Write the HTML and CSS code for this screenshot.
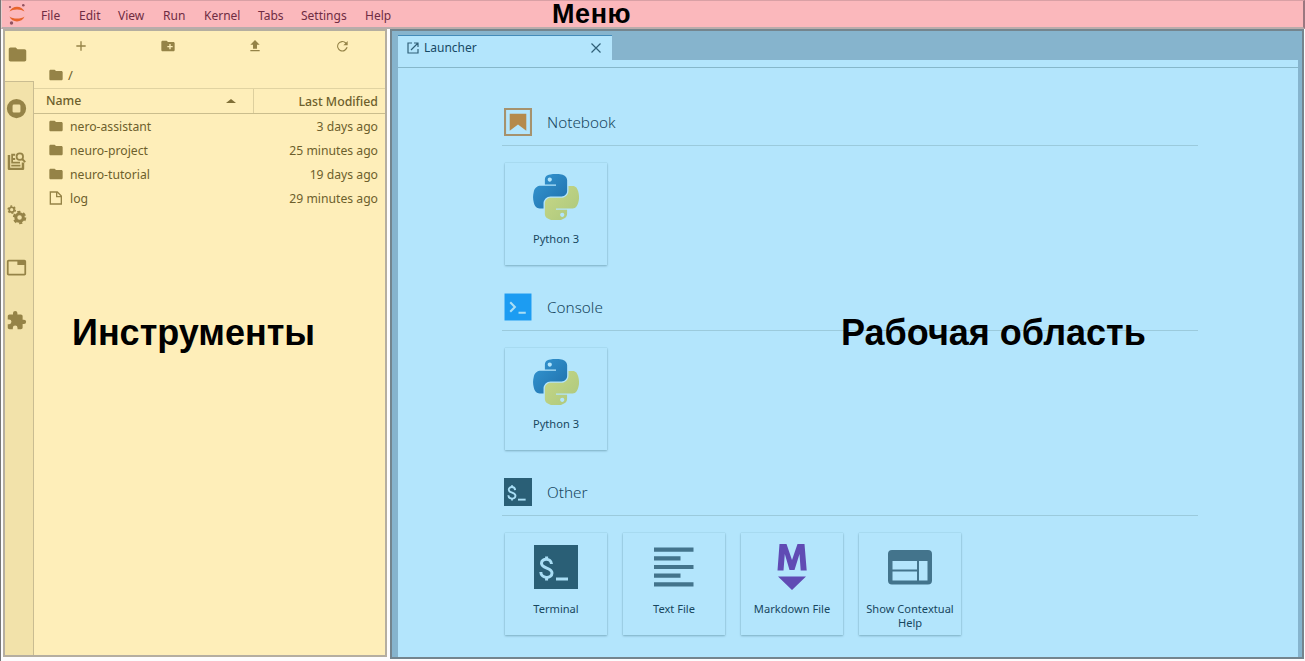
FILE: index.html
```html
<!DOCTYPE html>
<html lang="ru">
<head>
<meta charset="utf-8">
<title>JupyterLab</title>
<link rel="stylesheet" href="styles.css">
</head>
<body>
<svg class="defs" width="0" height="0">
  <defs>
    <linearGradient id="pyBlue" x1="0" y1="0" x2="1" y2="1"><stop offset="0" stop-color="#3598d3"/><stop offset="1" stop-color="#1e6eaa"/></linearGradient>
    <linearGradient id="pyGreen" x1="0" y1="0" x2="1" y2="1"><stop offset="0" stop-color="#c8d886"/><stop offset="1" stop-color="#abc77d"/></linearGradient>
    <symbol id="folder" viewBox="0 0 24 24"><path d="M10 4H4c-1.100 0-2 .9-2 2v12c0 1.100.9 2 2 2h16c1.100 0 2-.9 2-2V8c0-1.100-.9-2-2-2h-8z"/></symbol>
    <symbol id="python" viewBox="0 0 111 111">
      <path fill="url(#pyBlue)" d="M54.9 0c-4.6 0-9 .4-12.800 1.100C30.800 3.100 28.700 7.300 28.700 15v10.200h26.800v3.400H18.700c-7.800 0-14.600 4.700-16.700 13.600-2.500 10.200-2.600 16.600 0 27.200 1.900 7.900 6.400 13.600 14.200 13.600h9.200V70.800c0-8.800 7.700-16.700 16.800-16.700h26.800c7.400 0 13.400-6.100 13.400-13.600V15c0-7.300-6.100-12.700-13.400-13.900C64.300.3 59.500 0 54.900 0zM40.400 8.200c2.800 0 5.100 2.300 5.100 5.100s-2.300 5.100-5.100 5.100-5-2.300-5-5.100 2.200-5.100 5-5.100z"/>
      <path fill="url(#pyGreen)" d="M85.600 28.700v11.900c0 9.200-7.800 17-16.800 17H42c-7.300 0-13.400 6.300-13.400 13.600v25.500c0 7.300 6.300 11.500 13.400 13.600 8.500 2.500 16.600 3 26.800 0 6.700-2 13.400-5.900 13.400-13.600V86.500H55.500v-3.400h40.200c7.800 0 10.700-5.400 13.400-13.600 2.800-8.400 2.700-16.500 0-27.200-1.900-7.800-5.600-13.600-13.400-13.600zM70.600 93.300c2.800 0 5 2.300 5 5.100s-2.200 5.100-5 5.100-5.100-2.300-5.100-5.100 2.300-5.100 5.100-5.100z"/>
    </symbol>
    <symbol id="terminal" viewBox="0 0 44 44">
      <rect width="44" height="44" fill="#2a5f76"/>
      <path fill="none" stroke="#a9def5" stroke-width="3" d="M17.500 19C17 12.500 7.500 13 7.500 18.300c0 5.700 10.500 4 10.500 9.700 0 6-11 6-11.200-1M12.600 11.500v4M12.600 31v4.500"/>
      <path fill="#a9def5" d="M22 32.500h12v3H22z"/>
    </symbol>
  </defs>
</svg>
<div class="app">
  <header class="menubar">
    <svg class="logo" viewBox="0 0 18 22"><path fill="#e8642c" d="M1.500 8.500C4 2 14 2 16.500 8.500 13 5.800 5 5.800 1.500 8.500zM1.500 13.500c2.500 6.500 12.500 6.500 15 0-3.500 2.700-11.500 2.700-15 0z"/><g fill="#925360"><circle cx="2" cy="4" r="1.100"/><circle cx="15.300" cy="2.300" r="1.300"/><circle cx="3.500" cy="20" r="1.700"/></g></svg>
    <nav class="menus"><span class="m-file">File</span><span class="m-edit">Edit</span><span class="m-view">View</span><span class="m-run">Run</span><span class="m-kernel">Kernel</span><span class="m-tabs">Tabs</span><span class="m-settings">Settings</span><span>Help</span></nav>
    <div class="note note-menu">Меню</div>
  </header>
  <div class="body">
    <aside class="sidebar">
      <nav class="activity">
        <div class="act current"><svg viewBox="0 0 24 24"><use href="#folder"/></svg></div>
        <div class="rest">
          <div class="act"><svg viewBox="0 0 24 24"><path fill-rule="evenodd" d="M12 1a11 11 0 1 0 0 22 11 11 0 0 0 0-22zM9 7.500h6A1.500 1.500 0 0 1 16.500 9v6a1.500 1.500 0 0 1-1.500 1.500H9A1.500 1.500 0 0 1 7.500 15V9A1.500 1.500 0 0 1 9 7.500z"/></svg></div>
          <div class="act"><svg viewBox="0 0 24 24"><path d="M2 4.500h2.800V19H18v-6h2.800v7.300c0 .8-.6 1.400-1.400 1.400H3.400c-.8 0-1.400-.6-1.400-1.400z"/><path d="M6 3h4.500v2.500H8V8h2.500v2.200H8v2h8v2.200H6zM6 15.800h10.500v1.800H6z"/><circle cx="15.800" cy="6.500" r="3.700" fill="none" stroke="#958347" stroke-width="2"/><path fill="none" stroke="#958347" stroke-width="2.200" d="M18.500 9.200l3.500 3.500"/></svg></div>
          <div class="act"><svg viewBox="0 0 24 24"><g fill="none" stroke="#958347"><circle cx="15.500" cy="15.500" r="4.300" stroke-width="3.400"/><circle cx="15.500" cy="15.500" r="6.500" stroke-width="2.400" stroke-dasharray="3.600 3.207"/><circle cx="6.500" cy="6.500" r="2.800" stroke-width="1.900"/><circle cx="6.500" cy="6.500" r="4.100" stroke-width="1.700" stroke-dasharray="2.200 2.094"/></g></svg></div>
          <div class="act"><svg viewBox="0 0 24 24"><path fill-rule="evenodd" d="M3 3h18c1.100 0 2 .9 2 2v14c0 1.100-.9 2-2 2H3c-1.100 0-2-.9-2-2V5c0-1.100.9-2 2-2zm0 2v14h18V9h-8V5z"/></svg></div>
          <div class="act"><svg viewBox="0 0 24 24"><path d="M20.500 11H19V7c0-1.100-.9-2-2-2h-4V3.500a2.500 2.500 0 0 0-5 0V5H4c-1.100 0-2 .9-2 2v3.800h1.500a2.700 2.700 0 0 1 0 5.400H2V20c0 1.100.9 2 2 2h3.800v-1.500a2.700 2.700 0 0 1 5.400 0V22H17c1.100 0 2-.9 2-2v-4h1.500a2.500 2.500 0 0 0 0-5z"/></svg></div>
        </div>
      </nav>
      <section class="files">
        <div class="tools">
          <span><svg viewBox="0 0 24 24"><path d="M19 13h-6v6h-2v-6H5v-2h6V5h2v6h6z"/></svg></span>
          <span><svg viewBox="0 0 24 24"><path d="M20 6h-8l-2-2H4C2.900 4 2 4.900 2 6v12c0 1.100.9 2 2 2h16c1.100 0 2-.9 2-2V8c0-1.100-.9-2-2-2zm-1 8h-3v3h-2v-3h-3v-2h3V9h2v3h3z"/></svg></span>
          <span><svg viewBox="0 0 24 24"><path d="M9 16h6v-6h4l-7-7-7 7h4zm-4 2h14v2H5z"/></svg></span>
          <span><svg viewBox="0 0 24 24"><path d="M18.300 6.700A8 8 0 1 0 20.500 14h-2.100a6.200 6.200 0 1 1-1.500-5.900L14 11h6.500V4.500z"/></svg></span>
        </div>
        <div class="crumb"><svg viewBox="0 0 24 24"><use href="#folder"/></svg><span>/</span></div>
        <div class="head"><div class="h-name">Name<i class="sort"></i></div><div class="h-mod">Last Modified</div></div>
        <div class="list">
          <div class="row"><svg viewBox="0 0 24 24"><use href="#folder"/></svg><span>nero-assistant</span><time>3 days ago</time></div>
          <div class="row"><svg viewBox="0 0 24 24"><use href="#folder"/></svg><span>neuro-project</span><time>25 minutes ago</time></div>
          <div class="row"><svg viewBox="0 0 24 24"><use href="#folder"/></svg><span>neuro-tutorial</span><time>19 days ago</time></div>
          <div class="row"><svg viewBox="0 0 24 24"><path fill="none" stroke="#958347" stroke-width="2" d="M3.500 3h10.500l6 6v12H3.500zM13 3v7h7"/></svg><span>log</span><time>29 minutes ago</time></div>
        </div>
      </section>
      <div class="note note-tools">Инструменты</div>
    </aside>
    <main class="dock">
      <div class="tabbar"><div class="tab"><svg class="launch" viewBox="0 0 12 12"><path d="M5 1H1v10h10V7M7 1h4v4M11 1L4 8"/></svg><span>Launcher</span><svg class="close" viewBox="0 0 12 12"><path d="M1.500 1.500l9 9M10.500 1.500l-9 9"/></svg></div></div>
      <div class="strip"></div>
      <div class="launcher">
        <section class="group">
          <h2><svg viewBox="0 0 27 27"><path fill="none" stroke="#a6926d" stroke-width="2" d="M1 1h25v25H1z"/><path fill="#b58a4b" d="M5.500 5.500h16V22l-8-6-8 6z"/></svg>Notebook</h2>
          <div class="cards"><div class="card"><svg viewBox="0 0 46 46"><use href="#python"/></svg><p>Python 3</p></div></div>
        </section>
        <section class="group">
          <h2><svg viewBox="0 0 27 27"><path fill="#1c9cf2" d="M.5.500h26v26H.5z"/><path fill="none" stroke="#a9def5" stroke-width="2" d="M6 9l4.500 4.500L6 18M14 19h7"/></svg>Console</h2>
          <div class="cards"><div class="card"><svg viewBox="0 0 46 46"><use href="#python"/></svg><p>Python 3</p></div></div>
        </section>
        <section class="group">
          <h2><svg viewBox="0 0 27 27"><use href="#terminal"/></svg>Other</h2>
          <div class="cards">
            <div class="card"><svg viewBox="0 0 46 46"><use href="#terminal" x="1" y="1" width="44" height="44"/></svg><p>Terminal</p></div>
            <div class="card"><svg viewBox="0 0 46 46"><path fill="#43748c" d="M3 3.500h39.500v4.200H3zM3 12.200h26.500v4.200H3zM3 20.900h39.500v4.200H3zM3 29.600h26.500v4.200H3zM3 38.300h39.500v4.200H3z"/></svg><p>Text File</p></div>
            <div class="card"><svg viewBox="0 0 46 46"><path fill="#604bb4" d="M8.500 26.500L10.500 0h7L23 16 28.500 0h7l2.200 26.500h-6L30.500 10 25.500 26h-5L15.800 10l-1.300 16.500zM9 32.500h28L23 46z"/></svg><p>Markdown File</p></div>
            <div class="card"><svg viewBox="0 0 46 46"><path fill="#43748c" fill-rule="evenodd" d="M5 6h36a4 4 0 0 1 4 4v26.500a4 4 0 0 1-4 4H5a4 4 0 0 1-4-4V10a4 4 0 0 1 4-4zM5.500 17v8.500H30V17zm0 10.500v9H30v-9zM32 17v19.500h8.500V17z"/></svg><p>Show Contextual<br>Help</p></div>
          </div>
        </section>
      </div>
      <div class="note note-work">Рабочая область</div>
    </main>
  </div>
</div>
</body>
</html>
```
FILE: styles.css
```css
* { box-sizing: border-box; }
body { margin: 0; font-family: "Noto Sans", "Open Sans", sans-serif; font-size: 12px; background: #fdfcfd; }
.defs { position: absolute; }
.app { width: 1305px; height: 661px; display: flex; flex-direction: column; overflow: hidden; border-left: 1px solid #777; }
.menubar { position: relative; height: 29px; flex: none; display: flex; padding-left: 6px; background: #fbb8bc; border-top: 1px solid #d9a0a5; border-bottom: 2px solid #b9acab; border-right: 2px solid #9b7780; border-left: 1px solid #e8d0d0; }
.logo { width: 18px; height: 22px; margin-top: 2px; flex: none; }
.menus { display: flex; padding-left: 15px; line-height: 30px; color: #6f2c43; white-space: nowrap; }
.menus span { width: 54px; }
.menus .m-file { width: 38px; }
.menus .m-edit { width: 39px; }
.menus .m-view { width: 45px; }
.menus .m-run { width: 41px; }
.menus .m-tabs { width: 43px; }
.menus .m-settings { width: 64px; }
.note { position: absolute; font-family: "Liberation Sans", Arial, sans-serif; font-weight: bold; color: #000; white-space: nowrap; line-height: 1; }
.note-menu { left: 550px; top: 0; font-size: 27px; letter-spacing: 0.6px; }
.body { flex: 1; display: flex; gap: 3px; padding-left: 2px; min-height: 0; }
.sidebar { position: relative; width: 384px; height: 628px; display: flex; background: #feeeb9; border: 2px solid #b5aea0; }
.activity { width: 29px; flex: none; display: flex; flex-direction: column; fill: #958347; }
.act { height: 53px; display: flex; align-items: center; justify-content: center; margin-left: -5px; }
.act svg { width: 21px; height: 21px; }
.act.current { height: 50px; padding-bottom: 3px; }
.rest { flex: 1; background: #f2e2aa; border-top: 1px solid #c9bc91; border-right: 1px solid #c9bc91; }
.files { flex: 1; color: #6d5f2c; fill: #958347; }
.files svg { width: 16px; height: 16px; flex: none; }
.tools { height: 30px; display: grid; grid-template-columns: repeat(4, 87px); padding-left: 3px; }
.tools span { display: flex; align-items: center; justify-content: center; }
.crumb { height: 27px; display: flex; align-items: center; padding: 0 0 0 14px; gap: 4px; font-size: 13px; }
.head { height: 26px; display: flex; border-top: 1px solid #e1d3a1; border-bottom: 1px solid #cabd8d; line-height: 26px; font-weight: 500; font-size: 12.300px; }
.h-name { width: 220px; height: 24px; display: flex; align-items: center; justify-content: space-between; padding: 0 17px 0 12px; border-right: 1px solid #ddcf9e; }
.sort { border: 5px solid transparent; border-top: 0; border-bottom: 4px solid #806f37; }
.h-mod { flex: 1; text-align: right; padding-right: 7px; }
.row { height: 24px; display: flex; align-items: center; padding: 0 7px 0 14px; font-size: 12.200px; }
.row span { margin-left: 6px; flex: 1; }
.note-tools { left: 67px; top: 284px; font-size: 36px; }
.dock { position: relative; width: 914px; height: 630px; background: #86b4cd; border: 2px solid #74858e; display: flex; flex-direction: column; padding: 0 4px 0 6px; }
.tabbar { height: 29px; padding-top: 4px; flex: none; }
.tab { width: 214px; height: 25px; background: #b3e5fc; border-top: 1px solid #438bb9; display: flex; align-items: center; padding: 0 10px 1px 9px; color: #164965; }
.tab svg { fill: none; stroke: #306078; stroke-width: 1.200; width: 12px; height: 12px; }
.tab .close { margin-top: 1px; }
.tab span { margin-left: 5px; flex: 1; }
.strip { height: 8px; flex: none; background: #b3e5fc; border-bottom: 1px solid #86b7ca; }
.launcher { flex: 1; background: #b3e5fc; padding: 33px 100px 0 104px; color: #17475f; }
.group { height: 185px; }
.group h2 { display: flex; align-items: center; gap: 15px; height: 45px; margin: 0; padding: 0 0 2px 2px; border-bottom: 1px solid #9bcadc; font-weight: 300; font-size: 15.300px; }
.group h2 svg { width: 28px; height: 28px; }
.cards { display: flex; gap: 16px; padding: 17px 0 0 3px; }
.card { width: 102px; height: 102px; display: flex; flex-direction: column; align-items: center; padding-top: 11px; box-shadow: 0 1px 2px #7eafc4, 0 0 1px #8bbccf; }
.card svg { width: 46px; height: 46px; flex: none; overflow: visible; }
.card p { margin: 12px 0 0; text-align: center; font-size: 11.100px; line-height: 14px; white-space: nowrap; }
.note-work { left: 449px; top: 284px; font-size: 36px; }
```
